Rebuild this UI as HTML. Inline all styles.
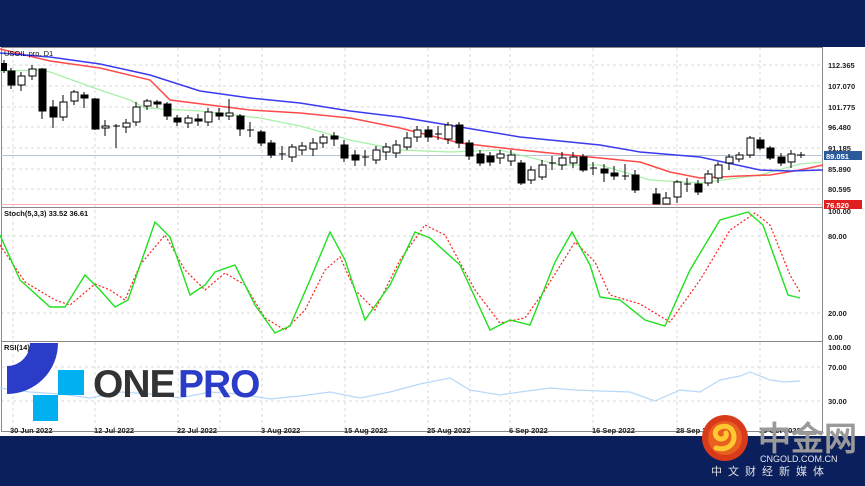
<!DOCTYPE html>
<html><head><meta charset="utf-8"><style>
html,body{margin:0;padding:0;width:865px;height:486px;overflow:hidden;background:#0a1f5c;}
svg{display:block}
text{font-family:"Liberation Sans",sans-serif;}
</style></head><body>
<svg width="865" height="486" viewBox="0 0 865 486" xmlns="http://www.w3.org/2000/svg">
<rect x="0" y="0" width="865" height="486" fill="#0a1f5c"/>
<rect x="0" y="47" width="865" height="389" fill="#fff"/>
<!-- grid -->
<g stroke="#d8d8d8" stroke-dasharray="3,3" stroke-width="1">
<line x1="13" y1="48" x2="13" y2="432"/><line x1="95" y1="48" x2="95" y2="432"/><line x1="178" y1="48" x2="178" y2="432"/><line x1="220" y1="48" x2="220" y2="432"/><line x1="262" y1="48" x2="262" y2="432"/><line x1="345" y1="48" x2="345" y2="432"/><line x1="428" y1="48" x2="428" y2="432"/><line x1="470" y1="48" x2="470" y2="432"/><line x1="510" y1="48" x2="510" y2="432"/><line x1="593" y1="48" x2="593" y2="432"/><line x1="677" y1="48" x2="677" y2="432"/><line x1="760" y1="48" x2="760" y2="432"/>
<line x1="1" y1="65" x2="823" y2="65"/><line x1="1" y1="86" x2="823" y2="86"/><line x1="1" y1="107" x2="823" y2="107"/><line x1="1" y1="127" x2="823" y2="127"/><line x1="1" y1="148" x2="823" y2="148"/><line x1="1" y1="169" x2="823" y2="169"/><line x1="1" y1="189" x2="823" y2="189"/>
<line x1="1" y1="236" x2="823" y2="236"/><line x1="1" y1="313" x2="823" y2="313"/>
<line x1="1" y1="367" x2="823" y2="367"/><line x1="1" y1="401" x2="823" y2="401"/>
</g>
<!-- frame -->
<g stroke="#888" fill="none" stroke-width="1">
<rect x="1.5" y="47.5" width="821" height="384"/>
<line x1="1" y1="207.5" x2="823" y2="207.5"/>
<line x1="1" y1="341.5" x2="823" y2="341.5"/>
</g>
<line x1="1" y1="155.5" x2="823" y2="155.5" stroke="#b8c4d4"/>
<line x1="1" y1="204.5" x2="823" y2="204.5" stroke="#ffb0b0"/>
<!-- MAs -->
<polyline fill="none" stroke="#a8f0a8" stroke-width="1.3" points="0,71 40,70 50,72 100,90 130,100 145,108 200,111 260,118 300,126 350,140 400,150 450,152 500,150 560,165 600,165 650,180 700,183 760,175 800,164 823,162"/>
<polyline fill="none" stroke="#ff4a4a" stroke-width="1.5" points="0,49 50,61 100,68 150,80 170,100 250,110 300,113 350,118 400,128 460,143 520,150 600,158 640,162 670,172 700,178 740,176 770,175 800,170 823,165"/>
<polyline fill="none" stroke="#3a3af0" stroke-width="1.5" points="0,53 50,57 100,64 150,75 200,91 250,98 300,103 350,111 400,117 460,127 520,137 600,145 640,152 700,157 760,170 790,171 823,170"/>
<!-- candles -->
<g stroke="#000" stroke-width="1">
<line x1="4" y1="60" x2="4" y2="73"/><rect x="1.5" y="63.5" width="5" height="7" fill="#000"/>
<line x1="11" y1="68" x2="11" y2="89"/><rect x="8" y="71" width="7" height="14" fill="#000"/>
<line x1="21" y1="72" x2="21" y2="91"/><rect x="18" y="76" width="7" height="9" fill="#fff"/>
<line x1="32" y1="65" x2="32" y2="80"/><rect x="29" y="69" width="7" height="7" fill="#fff"/>
<line x1="42" y1="68" x2="42" y2="119"/><rect x="39" y="69" width="7" height="42" fill="#000"/>
<line x1="53" y1="100" x2="53" y2="128"/><rect x="50" y="107" width="7" height="10" fill="#000"/>
<line x1="63" y1="95" x2="63" y2="121"/><rect x="60" y="102" width="7" height="15" fill="#fff"/>
<line x1="74" y1="90" x2="74" y2="105"/><rect x="71" y="92" width="7" height="9" fill="#fff"/>
<line x1="84" y1="92" x2="84" y2="108"/><rect x="81" y="95" width="7" height="3" fill="#000"/>
<line x1="95" y1="98" x2="95" y2="130"/><rect x="92" y="99" width="7" height="30" fill="#000"/>
<line x1="105" y1="120" x2="105" y2="136"/><rect x="102" y="126" width="7" height="2" fill="#fff"/>
<line x1="116" y1="124" x2="116" y2="148"/><line x1="113" y1="126" x2="120" y2="126"/>
<line x1="126" y1="119" x2="126" y2="133"/><rect x="123" y="123" width="7" height="4" fill="#fff"/>
<line x1="136" y1="102" x2="136" y2="126"/><rect x="133" y="107" width="7" height="15" fill="#fff"/>
<line x1="147" y1="99" x2="147" y2="110"/><rect x="144" y="101" width="7" height="5" fill="#fff"/>
<line x1="157" y1="100" x2="157" y2="108"/><rect x="154" y="102" width="7" height="2" fill="#000"/>
<line x1="167" y1="102" x2="167" y2="120"/><rect x="164" y="104" width="7" height="12" fill="#000"/>
<line x1="177" y1="115" x2="177" y2="126"/><rect x="174" y="118" width="7" height="4" fill="#000"/>
<line x1="188" y1="115" x2="188" y2="128"/><rect x="185" y="118" width="7" height="5" fill="#fff"/>
<line x1="198" y1="114" x2="198" y2="126"/><rect x="195" y="119" width="7" height="2" fill="#000"/>
<line x1="208" y1="108" x2="208" y2="126"/><rect x="205" y="112" width="7" height="10" fill="#fff"/>
<line x1="219" y1="108" x2="219" y2="120"/><rect x="216" y="113" width="7" height="3" fill="#000"/>
<line x1="229" y1="99" x2="229" y2="120"/><rect x="226" y="113" width="7" height="3" fill="#fff"/>
<line x1="240" y1="114" x2="240" y2="136"/><rect x="237" y="116" width="7" height="13" fill="#000"/>
<line x1="250" y1="122" x2="250" y2="137"/><line x1="247" y1="130" x2="254" y2="130"/>
<line x1="261" y1="130" x2="261" y2="146"/><rect x="258" y="132" width="7" height="11" fill="#000"/>
<line x1="271" y1="140" x2="271" y2="158"/><rect x="268" y="143" width="7" height="12" fill="#000"/>
<line x1="282" y1="146" x2="282" y2="160"/><line x1="279" y1="154" x2="286" y2="154"/>
<line x1="292" y1="144" x2="292" y2="162"/><rect x="289" y="147" width="7" height="10" fill="#fff"/>
<line x1="302" y1="142" x2="302" y2="155"/><rect x="299" y="146" width="7" height="4" fill="#fff"/>
<line x1="313" y1="138" x2="313" y2="156"/><rect x="310" y="143" width="7" height="6" fill="#fff"/>
<line x1="323" y1="134" x2="323" y2="148"/><rect x="320" y="137" width="7" height="6" fill="#fff"/>
<line x1="334" y1="132" x2="334" y2="146"/><rect x="331" y="136" width="7" height="3" fill="#000"/>
<line x1="344" y1="140" x2="344" y2="162"/><rect x="341" y="145" width="7" height="13" fill="#000"/>
<line x1="355" y1="150" x2="355" y2="166"/><rect x="352" y="155" width="7" height="5" fill="#000"/>
<line x1="365" y1="150" x2="365" y2="166"/><line x1="362" y1="157" x2="369" y2="157"/>
<line x1="376" y1="146" x2="376" y2="164"/><rect x="373" y="150" width="7" height="10" fill="#fff"/>
<line x1="386" y1="143" x2="386" y2="160"/><rect x="383" y="147" width="7" height="5" fill="#fff"/>
<line x1="396" y1="140" x2="396" y2="158"/><rect x="393" y="145" width="7" height="8" fill="#fff"/>
<line x1="407" y1="132" x2="407" y2="150"/><rect x="404" y="138" width="7" height="9" fill="#fff"/>
<line x1="417" y1="126" x2="417" y2="142"/><rect x="414" y="130" width="7" height="7" fill="#fff"/>
<line x1="428" y1="126" x2="428" y2="142"/><rect x="425" y="130" width="7" height="7" fill="#000"/>
<line x1="438" y1="126" x2="438" y2="140"/><line x1="435" y1="134" x2="442" y2="134"/>
<line x1="448" y1="122" x2="448" y2="144"/><rect x="445" y="125" width="7" height="14" fill="#fff"/>
<line x1="459" y1="122" x2="459" y2="148"/><rect x="456" y="125" width="7" height="18" fill="#000"/>
<line x1="469" y1="140" x2="469" y2="160"/><rect x="466" y="143" width="7" height="13" fill="#000"/>
<line x1="480" y1="150" x2="480" y2="166"/><rect x="477" y="154" width="7" height="9" fill="#000"/>
<line x1="490" y1="152" x2="490" y2="166"/><rect x="487" y="156" width="7" height="6" fill="#000"/>
<line x1="500" y1="150" x2="500" y2="164"/><rect x="497" y="154" width="7" height="4" fill="#fff"/>
<line x1="511" y1="150" x2="511" y2="166"/><rect x="508" y="155" width="7" height="6" fill="#fff"/>
<line x1="521" y1="160" x2="521" y2="185"/><rect x="518" y="163" width="7" height="20" fill="#000"/>
<line x1="531" y1="166" x2="531" y2="184"/><rect x="528" y="170" width="7" height="10" fill="#fff"/>
<line x1="542" y1="160" x2="542" y2="180"/><rect x="539" y="165" width="7" height="12" fill="#fff"/>
<line x1="552" y1="156" x2="552" y2="170"/><line x1="549" y1="163" x2="556" y2="163"/>
<line x1="562" y1="152" x2="562" y2="170"/><rect x="559" y="158" width="7" height="7" fill="#fff"/>
<line x1="573" y1="152" x2="573" y2="168"/><rect x="570" y="157" width="7" height="6" fill="#fff"/>
<line x1="583" y1="154" x2="583" y2="172"/><rect x="580" y="157" width="7" height="13" fill="#000"/>
<line x1="593" y1="162" x2="593" y2="175"/><line x1="590" y1="168" x2="597" y2="168"/>
<line x1="604" y1="164" x2="604" y2="182"/><rect x="601" y="169" width="7" height="4" fill="#000"/>
<line x1="614" y1="166" x2="614" y2="180"/><rect x="611" y="173" width="7" height="3" fill="#000"/>
<line x1="625" y1="164" x2="625" y2="180"/><line x1="622" y1="176" x2="629" y2="176"/>
<line x1="635" y1="170" x2="635" y2="193"/><rect x="632" y="175" width="7" height="15" fill="#000"/>
<line x1="656" y1="188" x2="656" y2="204"/><rect x="653" y="194" width="7" height="10" fill="#000"/>
<line x1="666" y1="192" x2="666" y2="204"/><rect x="663" y="198" width="7" height="6" fill="#fff"/>
<line x1="677" y1="180" x2="677" y2="203"/><rect x="674" y="182" width="7" height="15" fill="#fff"/>
<line x1="687" y1="178" x2="687" y2="192"/><line x1="684" y1="184" x2="691" y2="184"/>
<line x1="698" y1="180" x2="698" y2="195"/><rect x="695" y="184" width="7" height="8" fill="#000"/>
<line x1="708" y1="170" x2="708" y2="186"/><rect x="705" y="174" width="7" height="9" fill="#fff"/>
<line x1="718" y1="162" x2="718" y2="183"/><rect x="715" y="165" width="7" height="13" fill="#fff"/>
<line x1="729" y1="154" x2="729" y2="170"/><rect x="726" y="157" width="7" height="6" fill="#fff"/>
<line x1="739" y1="152" x2="739" y2="162"/><rect x="736" y="155" width="7" height="4" fill="#fff"/>
<line x1="750" y1="136" x2="750" y2="158"/><rect x="747" y="138" width="7" height="17" fill="#fff"/>
<line x1="760" y1="137" x2="760" y2="150"/><rect x="757" y="140" width="7" height="8" fill="#000"/>
<line x1="770" y1="146" x2="770" y2="160"/><rect x="767" y="148" width="7" height="10" fill="#000"/>
<line x1="781" y1="153" x2="781" y2="166"/><rect x="778" y="157" width="7" height="6" fill="#000"/>
<line x1="791" y1="150" x2="791" y2="168"/><rect x="788" y="154" width="7" height="8" fill="#fff"/>
<line x1="801" y1="152" x2="801" y2="158"/><line x1="797" y1="155" x2="805" y2="155"/>
</g>
<!-- price labels -->
<g font-size="7.5" font-weight="bold" fill="#222">
<text x="828" y="68">112.365</text><text x="828" y="89">107.070</text><text x="828" y="110">101.775</text><text x="828" y="130">96.480</text><text x="828" y="151">91.185</text><text x="828" y="172">85.890</text><text x="828" y="192">80.595</text>
<text x="828" y="214">100.00</text><text x="828" y="239">80.00</text><text x="828" y="316">20.00</text><text x="828" y="340">0.00</text>
<text x="828" y="350">100.00</text><text x="828" y="370">70.00</text><text x="828" y="404">30.00</text>
</g>
<rect x="824" y="151" width="38" height="9" fill="#2b5a9a"/><text x="826" y="159" font-size="7.5" font-weight="bold" fill="#fff">89.051</text>
<rect x="824" y="200" width="38" height="9" fill="#e02020"/><text x="826" y="208" font-size="7.5" font-weight="bold" fill="#fff">76.520</text>
<text x="4" y="56" font-size="7.5" fill="#111">USOIL.pro, D1</text>
<text x="4" y="216" font-size="7.5" font-weight="bold" fill="#111">Stoch(5,3,3) 33.52 36.61</text>
<text x="4" y="350" font-size="7.5" font-weight="bold" fill="#111">RSI(14) 53.80</text>
<!-- stoch -->
<polyline fill="none" stroke="#ff2020" stroke-width="1.2" stroke-dasharray="2,2" points="0,245 25,282 55,300 70,305 95,284 110,290 125,300 140,265 165,235 185,270 205,290 225,273 245,285 265,318 285,330 305,310 325,270 340,257 355,290 375,310 400,260 425,225 445,235 475,290 500,323 525,318 545,290 575,242 595,262 610,295 640,304 670,322 700,280 730,230 755,213 770,225 790,275 800,292"/>
<polyline fill="none" stroke="#20e020" stroke-width="1.4" points="0,235 20,280 50,307 65,307 85,275 100,290 115,307 128,300 155,222 170,237 190,295 205,285 215,272 235,265 255,305 275,333 290,326 310,280 330,232 345,260 365,320 390,285 415,232 430,238 460,265 490,330 510,320 530,325 555,262 572,232 590,265 600,297 620,300 645,320 665,326 690,270 720,220 748,212 763,225 788,295 800,298"/>
<!-- rsi -->
<polyline fill="none" stroke="#b8d8f8" stroke-width="1.2" points="0,388 30,392 60,394 90,398 120,392 150,394 180,398 210,392 240,394 270,399 300,396 330,392 360,398 390,392 420,384 450,378 470,390 500,395 520,392 550,388 575,390 600,391 630,392 655,401 680,390 700,392 720,380 740,376 750,372 770,380 785,382 800,381"/>
<!-- dates -->
<g font-size="7.5" font-weight="bold" fill="#222">
<text x="10" y="433">30 Jun 2022</text><text x="94" y="433">12 Jul 2022</text><text x="177" y="433">22 Jul 2022</text><text x="261" y="433">3 Aug 2022</text><text x="344" y="433">15 Aug 2022</text><text x="427" y="433">25 Aug 2022</text><text x="509" y="433">6 Sep 2022</text><text x="592" y="433">16 Sep 2022</text><text x="676" y="433">28 Sep 2022</text><text x="759" y="433">10 Oct 2022</text>
</g>
<!-- ONEPRO logo -->
<path d="M7,394 A51,51 0 0 0 58,343 L30,343 A23,23 0 0 1 7,366 Z" fill="#2b3cc8"/>
<rect x="58" y="370" width="26" height="25" fill="#00b0f0"/>
<rect x="33" y="395" width="25" height="26" fill="#00b0f0"/>
<text x="93" y="397" font-size="39" font-weight="bold" fill="#333" letter-spacing="-1">ONE</text>
<text x="178" y="397" font-size="39" font-weight="bold" fill="#2b3cc8" letter-spacing="-1">PRO</text>
<!-- cngold logo -->
<circle cx="725" cy="438" r="23" fill="#d83a1a"/>
<circle cx="725" cy="438" r="17" fill="#e86020"/>
<path d="M716,448 C730,452 738,440 732,430 C726,422 712,428 716,436 C720,442 728,438 726,433" fill="none" stroke="#ffc830" stroke-width="5" stroke-linecap="round"/>
<text x="758" y="450" font-size="33" font-weight="bold" fill="#9a9a9a" font-family="'Liberation Sans','Noto Sans CJK SC',sans-serif">中金网</text>
<text x="760" y="462" font-size="9" fill="#e8e8e8">CNGOLD.COM.CN</text>
<text x="711" y="475" font-size="11" fill="#e0e0e0" letter-spacing="6" font-family="'Liberation Sans','Noto Sans CJK SC',sans-serif">中文财经新媒体</text>
</svg>
</body></html>
